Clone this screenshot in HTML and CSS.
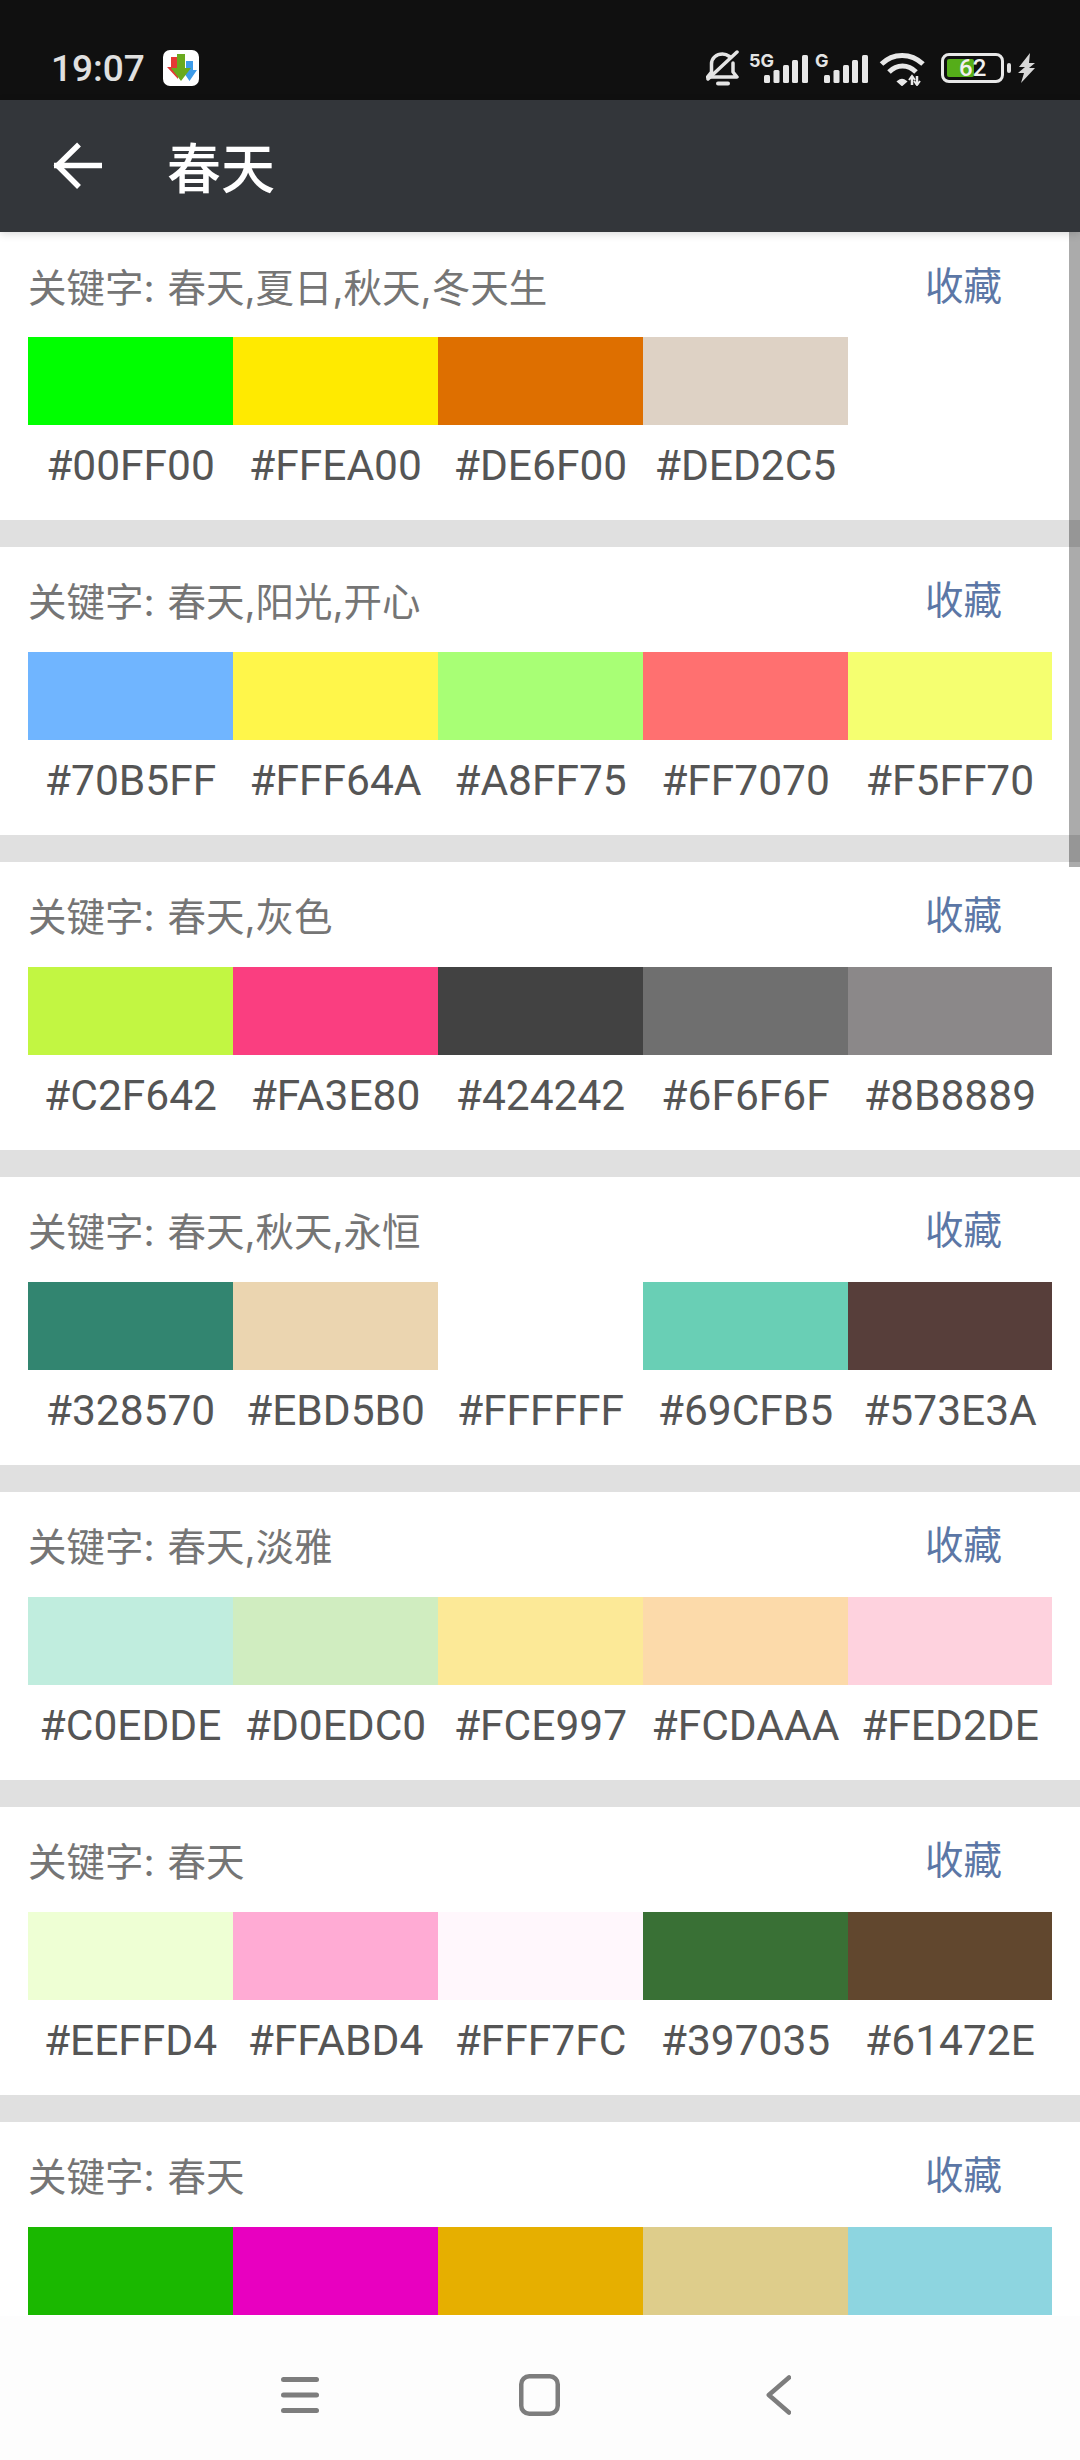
FILE: index.html
```html
<!DOCTYPE html>
<html lang="zh">
<head>
<meta charset="utf-8">
<title>春天</title>
<link rel="stylesheet" href="styles.css">
</head>
<body>
<div class="status">
  <span class="time">19:07</span>
  <svg class="appicon" width="36" height="36" viewBox="0 0 36 36"><rect width="36" height="36" rx="7" fill="#fff"/><path d="M8 7h7v14h-7z M4 17h11v12z" fill="#e53935"/><path d="M23 11h7v10h-7z M19 20h15l-7.500 11z" fill="#3d9be9"/><path d="M14 4h8v15h-8z M8 18h20l-10 13z" fill="#6aaa1e"/></svg>
  <div class="status-icons">
    <svg class="ic-bell" width="34" height="38" viewBox="0 0 34 38" fill="none" stroke="#e4e4e4" stroke-width="3.500" stroke-linecap="round" stroke-linejoin="round"><path d="M10 27H1.500l4-5v-8c0-6 5-10 11-10 3 0 5 1 7 2.500M27 13v9l4 5H10"/><path d="M2 29 31 2"/><path d="M12 33.500h10" stroke-width="4"/></svg>
    <div class="signal"><span class="net">5G</span><svg width="44" height="28" viewBox="0 0 44 28" fill="#e8e8e8"><rect x="0" y="20" width="6" height="8" rx="1.500"/><rect x="9.500" y="15" width="6" height="13" rx="1.500"/><rect x="19" y="10" width="6" height="18" rx="1.500"/><rect x="28" y="5" width="6" height="23" rx="1.500"/><rect x="38" y="0" width="6" height="28" rx="1.500"/></svg></div>
    <div class="signal sig-g"><span class="net">G</span><svg width="44" height="28" viewBox="0 0 44 28" fill="#e8e8e8"><rect x="0" y="20" width="6" height="8" rx="1.500"/><rect x="9.500" y="15" width="6" height="13" rx="1.500"/><rect x="19" y="10" width="6" height="18" rx="1.500"/><rect x="28" y="5" width="6" height="23" rx="1.500"/><rect x="38" y="0" width="6" height="28" rx="1.500"/></svg></div>
    <svg class="ic-wifi" width="48" height="34" viewBox="0 0 48 34" fill="none" stroke="#e8e8e8" stroke-width="5"><path d="M2.500 12C14 .5 32 .5 44 12"/><path d="M10 20c8-8 19-8 27 0"/><path d="M19 29.500l4 3.500 4-3.500c-2.500-2-5.500-2-8 0z" fill="#e8e8e8" stroke-width="2"/><path d="M33 24v9M38 33v-9" stroke-width="2.500"/><path d="M30 28l3-4 3 4M35 29l3 4 3-4" stroke-width="2"/></svg>
    <div class="battery"><div class="cell"><div class="charge"></div><span class="level">62</span></div><div class="nub"></div></div>
    <svg class="ic-bolt" width="18" height="30" viewBox="0 0 18 30" fill="#d8d8d8"><path d="M12 0 1 14h6l-7 6h6L3 30l14-15h-6l6-5h-6z"/></svg>
  </div>
</div>
<header class="appbar">
  <svg class="back" width="50" height="50" viewBox="0 0 50 50" fill="none" stroke="#fff" stroke-width="5.500"><path d="M2 24.500H50"/><path d="M27 3.500 5.500 24.500 27 46"/></svg>
  <h1 class="title">春天</h1>
</header>
<main class="list">
  <section class="card">
    <div class="head"><span class="kw">关键字: 春天,夏日,秋天,冬天生</span><span class="fav">收藏</span></div>
    <div class="swatches"><i style="background:#00FF00"></i><i style="background:#FFEA00"></i><i style="background:#DE6F00"></i><i style="background:#DED2C5"></i></div>
    <div class="codes"><span>#00FF00</span><span>#FFEA00</span><span>#DE6F00</span><span>#DED2C5</span></div>
  </section>
  <section class="card">
    <div class="head"><span class="kw">关键字: 春天,阳光,开心</span><span class="fav">收藏</span></div>
    <div class="swatches"><i style="background:#70B5FF"></i><i style="background:#FFF64A"></i><i style="background:#A8FF75"></i><i style="background:#FF7070"></i><i style="background:#F5FF70"></i></div>
    <div class="codes"><span>#70B5FF</span><span>#FFF64A</span><span>#A8FF75</span><span>#FF7070</span><span>#F5FF70</span></div>
  </section>
  <section class="card">
    <div class="head"><span class="kw">关键字: 春天,灰色</span><span class="fav">收藏</span></div>
    <div class="swatches"><i style="background:#C2F642"></i><i style="background:#FA3E80"></i><i style="background:#424242"></i><i style="background:#6F6F6F"></i><i style="background:#8B8889"></i></div>
    <div class="codes"><span>#C2F642</span><span>#FA3E80</span><span>#424242</span><span>#6F6F6F</span><span>#8B8889</span></div>
  </section>
  <section class="card">
    <div class="head"><span class="kw">关键字: 春天,秋天,永恒</span><span class="fav">收藏</span></div>
    <div class="swatches"><i style="background:#328570"></i><i style="background:#EBD5B0"></i><i style="background:#FFFFFF"></i><i style="background:#69CFB5"></i><i style="background:#573E3A"></i></div>
    <div class="codes"><span>#328570</span><span>#EBD5B0</span><span>#FFFFFF</span><span>#69CFB5</span><span>#573E3A</span></div>
  </section>
  <section class="card">
    <div class="head"><span class="kw">关键字: 春天,淡雅</span><span class="fav">收藏</span></div>
    <div class="swatches"><i style="background:#C0EDDE"></i><i style="background:#D0EDC0"></i><i style="background:#FCE997"></i><i style="background:#FCDAAA"></i><i style="background:#FED2DE"></i></div>
    <div class="codes"><span>#C0EDDE</span><span>#D0EDC0</span><span>#FCE997</span><span>#FCDAAA</span><span>#FED2DE</span></div>
  </section>
  <section class="card">
    <div class="head"><span class="kw">关键字: 春天</span><span class="fav">收藏</span></div>
    <div class="swatches"><i style="background:#EEFFD4"></i><i style="background:#FFABD4"></i><i style="background:#FFF7FC"></i><i style="background:#397035"></i><i style="background:#61472E"></i></div>
    <div class="codes"><span>#EEFFD4</span><span>#FFABD4</span><span>#FFF7FC</span><span>#397035</span><span>#61472E</span></div>
  </section>
  <section class="card">
    <div class="head"><span class="kw">关键字: 春天</span><span class="fav">收藏</span></div>
    <div class="swatches"><i style="background:#1AB800"></i><i style="background:#E800C0"></i><i style="background:#E6AF00"></i><i style="background:#DECD8B"></i><i style="background:#8DD5E0"></i></div>
  </section>
  <div class="scrollbar"></div>
</main>
<nav class="navbar">
  <svg class="nav-menu" width="38" height="36" viewBox="0 0 38 36" fill="#7d7d7d"><rect y="0" width="38" height="5" rx="2.500"/><rect y="15.500" width="38" height="5" rx="2.500"/><rect y="31" width="38" height="5" rx="2.500"/></svg>
  <svg class="nav-home" width="41" height="42" viewBox="0 0 41 42" fill="none" stroke="#7d7d7d" stroke-width="4.500"><rect x="2.250" y="2.250" width="36.500" height="37.500" rx="8"/></svg>
  <svg class="nav-back" width="25" height="40" viewBox="0 0 25 40" fill="none" stroke="#7d7d7d" stroke-width="4.500" stroke-linecap="round" stroke-linejoin="round"><path d="M23 2.500 2.800 20 23 37.500"/></svg>
</nav>
</body>
</html>
```
FILE: styles.css
```css
* { box-sizing: border-box; }
html, body { margin: 0; padding: 0; }
body {
  width: 1080px;
  height: 2460px;
  display: flex;
  flex-direction: column;
  overflow: hidden;
  background: #fff;
  font-family: Roboto, "Noto Sans CJK SC", sans-serif;
}
.status {
  height: 100px;
  flex: none;
  background: #101010;
  display: flex;
  align-items: flex-start;
  padding: 50px 0 0 51px;
  position: relative;
}
.time {
  font-size: 37px;
  line-height: 38px;
  font-weight: 500;
  color: #e0e0e0;
  width: 112px;
}
.appicon { flex: none; display: block; }
.status-icons {
  margin-left: auto;
  display: flex;
  align-items: flex-start;
  padding-right: 44px;
}
.ic-bell { display: block; margin-right: 9px; }
.signal { position: relative; width: 60px; height: 36px; }
.signal svg { position: absolute; left: 15px; top: 5px; display: block; }
.net {
  position: absolute;
  left: 0;
  top: 2px;
  font-family: Inter, Roboto, sans-serif;
  font-size: 18px;
  line-height: 18px;
  font-weight: 700;
  color: #e4e4e4;
}
.sig-g { margin-right: 11px; width: 59px; }
.sig-g .net { left: 6px; }
.ic-wifi { display: block; margin-top: 2px; margin-right: 14px; }
.battery { display: flex; align-items: center; margin-top: 3px; margin-right: 7px; }
.cell {
  width: 63px;
  height: 30px;
  border: 3px solid #e8e8e8;
  border-radius: 8px;
  position: relative;
  overflow: hidden;
}
.charge { position: absolute; left: 3px; top: 3px; bottom: 3px; width: 27px; background: #55ad19; border-radius: 2px; }
.level {
  position: absolute;
  left: 15px;
  top: -3px;
  font-size: 24px;
  line-height: 30px;
  color: #f0f0f0;
  font-weight: 500;
}
.nub { width: 4px; height: 10px; border-radius: 2px; background: #e0e0e0; margin-left: 3px; }
.ic-bolt { display: block; margin-top: 3px; }
.appbar {
  height: 132px;
  flex: none;
  background: #33363a;
  display: flex;
  align-items: center;
  padding-left: 52px;
  box-shadow: 0 2px 8px rgba(0,0,0,.15);
  position: relative;
  z-index: 2;
}
.back { display: block; margin-right: 65px; }
.title {
  margin: 0;
  font-family: "Noto Sans CJK SC", sans-serif;
  font-size: 54px;
  font-weight: 500;
  color: #fff;
  line-height: 60px;
}
.list {
  flex: 1;
  min-height: 0;
  overflow: hidden;
  position: relative;
  background: #e0e0e0;
}
.card {
  height: 287.6px;
  margin-bottom: 27.4px;
  background: #fff;
  padding: 0 28px;
}
.head {
  height: 105px;
  display: flex;
  justify-content: space-between;
  align-items: center;
  padding-right: 50px;
  font-family: Inter, "Noto Sans CJK SC", sans-serif;
  font-size: 38.5px;
}
.kw { color: #757575; word-spacing: 2px; }
.fav { color: #5c77a6; position: relative; top: -2px; }
.swatches {
  display: grid;
  grid-template-columns: 205px 205px 205px 205px 204px;
  height: 88px;
}
.swatches i { display: block; }
.codes {
  display: grid;
  grid-template-columns: 205px 205px 205px 205px 204px;
  height: 82px;
  line-height: 82px;
  text-align: center;
  font-family: Roboto, sans-serif;
  font-size: 42.5px;
  color: #555;
}
.scrollbar {
  position: absolute;
  top: 0;
  right: 0;
  width: 11px;
  height: 635px;
  background: rgba(0,0,0,.33);
}
.navbar {
  height: 144px;
  flex: none;
  background: #fdfdfd;
  position: relative;
  z-index: 2;
}
.navbar svg { position: absolute; display: block; }
.nav-menu { left: 281px; top: 61px; }
.nav-home { left: 519px; top: 58px; }
.nav-back { left: 766px; top: 59px; }
```
